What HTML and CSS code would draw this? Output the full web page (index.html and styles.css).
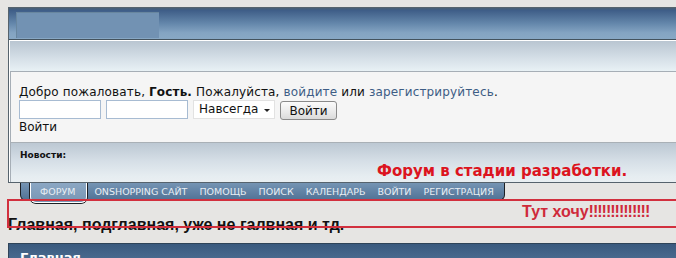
FILE: index.html
```html
<!DOCTYPE html>
<html lang="ru">
<head>
  <meta charset="UTF-8">
  <title>Форум</title>
  <link rel="stylesheet" href="styles.css">
</head>
<body>
<div class="page">

  <div class="forum">
    <div class="header">
      <div class="logo"></div>
    </div>
    <div class="subbar"></div>
    <div class="userbox">
      <p class="welcome">Добро пожаловать, <b>Гость.</b> Пожалуйста, <a href="#">войдите</a> или <a href="#">зарегистрируйтесь</a>.</p>
      <form class="login">
        <input type="text" class="field">
        <input type="password" class="field">
        <span class="select">Навсегда</span>
        <button type="button" class="btn">Войти</button>
      </form>
      <div class="login-label">Войти</div>
    </div>
    <div class="news">
      <div class="news-title">Новости:</div>
      <div class="news-text">Форум в стадии разработки.</div>
    </div>
  </div>

  <ul class="menu">
    <li class="active">ФОРУМ</li>
    <li>ONSHOPPING САЙТ</li>
    <li>ПОМОЩЬ</li>
    <li>ПОИСК</li>
    <li>КАЛЕНДАРЬ</li>
    <li>ВОЙТИ</li>
    <li>РЕГИСТРАЦИЯ</li>
  </ul>

  <div class="crumbs">Главная, подглавная, уже не галвная и тд.</div>

  <div class="cat">
    <div class="cat-head">Главная</div>
  </div>

  <div class="note"><span class="note-text">Тут хочу<span class="bang">!!!!!!!!!!!!!!</span></span></div>

</div>
</body>
</html>
```

FILE: styles.css
```css
body {
  margin: 0;
  background-color: #e6e5e3;
  font-family: "DejaVu Sans", Verdana, sans-serif;
  font-size: 12px;
  color: #111;
  overflow: hidden;
}
.page {
  position: relative;
  padding: 7px 0 0 8px;
}
.forum {
  background-color: #fff;
  border: 1px solid #56636d;
  border-right: 0;
}
.header {
  height: 32px;
  box-sizing: border-box;
  padding: 4px 0 0 7px;
  border-bottom: 1px solid #44535e;
  background: linear-gradient(#4a5f74 0, #3f5e88 8%, #6487ab 50%, #84a4c2 80%, #88a8c5);
}
.logo {
  width: 143px;
  height: 26px;
  background-color: #7292b3;
  border-top: 1px solid #68869f;
  border-left: 1px solid #68869f;
  box-sizing: border-box;
}
.subbar {
  height: 30px;
  margin-left: 1px;
  border-top: 1px solid #fff;
  background: linear-gradient(#b9c5d1, #d6e0e8 60%, #e8f1f5);
}
.userbox {
  margin-left: 1px;
  border-top: 1px solid #a6aeb6;
  border-bottom: 1px solid #a9b0b6;
  border-left: 1px solid #a6aeb6;
  background-color: #f5f5f5;
  padding: 13px 0 7px 8px;
}
.welcome {
  margin: 0;
  line-height: 15px;
  letter-spacing: 0.15px;
}
.welcome a {
  color: #3d5d85;
  text-decoration: none;
}
.login {
  display: flex;
  gap: 5px;
  height: 19px;
  margin: 0;
}
.field {
  width: 82px;
  height: 19px;
  box-sizing: border-box;
  margin: 0;
  border: 1px solid #a7bbd2;
  background: #fff;
  padding: 0 2px;
}
.select {
  position: relative;
  width: 82px;
  height: 19px;
  box-sizing: border-box;
  border: 1px solid #e2e2e2;
  background: #fff;
  padding-left: 5px;
  line-height: 17px;
}
.select::after {
  content: "";
  position: absolute;
  right: 4px;
  top: 8px;
  border-left: 3px solid transparent;
  border-right: 3px solid transparent;
  border-top: 3px solid #222;
}
.btn {
  width: 57px;
  height: 19px;
  margin-top: 1px;
  padding: 0;
  border: 1px solid #8a8a8a;
  border-radius: 3px;
  background: linear-gradient(#fbfbfb, #e9e9e9 60%, #dadada);
  font-family: "DejaVu Sans", Verdana, sans-serif;
  font-size: 12px;
  color: #111;
}
.login-label {
  margin-top: 1px;
  line-height: 15px;
}
.news {
  margin-left: 1px;
  border-left: 1px solid #a6aeb6;
  background: linear-gradient(#bcc8d3, #d5dee6 45%, #e6edf1 85%, #e9eff2);
  padding: 7px 0 2px 9px;
}
.news-title {
  font-size: 9px;
  font-weight: bold;
  line-height: 11px;
  color: #111;
}
.news-text {
  padding: 2px 0 0 357px;
  font-size: 15px;
  font-weight: bold;
  line-height: 17px;
  color: #dc1420;
}
.menu {
  display: inline-flex;
  align-items: flex-start;
  height: 17px;
  margin: 0 0 0 12px;
  padding: 0 4px 0 9px;
  list-style: none;
  border: 1px solid #1c1f24;
  border-top: 0;
  border-radius: 0 0 6px 6px;
  background: linear-gradient(#7594b3, #6283a5 50%, #517295);
}
.menu li {
  padding: 0 6px;
  line-height: 17px;
  font-size: 9.5px;
  color: #e8eef4;
  white-space: nowrap;
}
.menu li.active {
  padding: 0 11px 2px 9px;
  margin-right: 1px;
  background: linear-gradient(#8ba7c3, #7896b5);
  border: 1px solid #fff;
  border-top: 0;
  border-radius: 0 0 6px 6px;
  box-shadow: 0 1px 0 0 #1c1f24, -1px 0 0 0 #1c1f24, 1px 0 0 0 #1c1f24;
}
.crumbs {
  margin-top: 15px;
  font-family: "Liberation Sans", Arial, sans-serif;
  font-size: 16px;
  font-weight: bold;
  line-height: 18px;
  color: #111;
}
.cat {
  margin-top: 9px;
  border: 1px solid #2f4459;
  border-right: 0;
}
.cat-head {
  height: 40px;
  padding: 6px 0 0 11px;
  background: linear-gradient(#3a5a7f, #56779b 60%, #7090b0);
  font-weight: bold;
  font-size: 13px;
  color: #fff;
}
.note {
  position: absolute;
  left: 7px;
  top: 199px;
  width: 700px;
  height: 29px;
  box-sizing: border-box;
  border: 2px solid #d2303e;
  padding-left: 513px;
}
.note-text {
  font-family: "Liberation Sans", Arial, sans-serif;
  font-size: 16px;
  font-weight: bold;
  line-height: 22px;
  color: #cf2a3a;
}
.bang {
  letter-spacing: -1px;
}
```
